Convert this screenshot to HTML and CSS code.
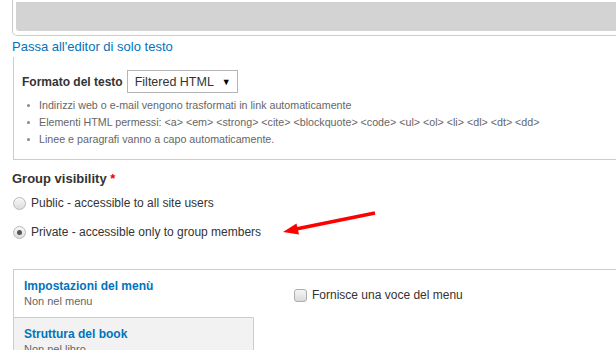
FILE: index.html
```html
<!DOCTYPE html>
<html>
<head>
<meta charset="utf-8">
<title>Group visibility</title>
<link rel="stylesheet" href="styles.css">
</head>
<body>
<div class="page">

  <div class="editor">
    <div class="editor-bottom"></div>
  </div>
  <a class="switch" href="#">Passa all'editor di solo testo</a>

  <div class="format">
    <div class="format-row">
      <span class="format-label">Formato del testo</span>
      <span class="select">Filtered HTML <span class="caret">&#9660;</span></span>
    </div>
    <ul class="tips">
      <li>Indirizzi web o e-mail vengono trasformati in link automaticamente</li>
      <li>Elementi HTML permessi: &lt;a&gt; &lt;em&gt; &lt;strong&gt; &lt;cite&gt; &lt;blockquote&gt; &lt;code&gt; &lt;ul&gt; &lt;ol&gt; &lt;li&gt; &lt;dl&gt; &lt;dt&gt; &lt;dd&gt;</li>
      <li>Linee e paragrafi vanno a capo automaticamente.</li>
    </ul>
  </div>

  <div class="field">
    <div class="field-label">Group visibility <span class="req">*</span></div>
    <div class="radio"><span class="radio-box"></span>Public - accessible to all site users</div>
    <div class="radio"><span class="radio-box checked"></span>Private - accessible only to group members</div>
  </div>

  <div class="vtabs">
    <ul class="vtab-list">
      <li class="vtab active">
        <a href="#">Impostazioni del menù</a>
        <span class="summary">Non nel menu</span>
      </li>
      <li class="vtab">
        <a href="#">Struttura del book</a>
        <span class="summary">Non nel libro</span>
      </li>
    </ul>
    <div class="vtab-pane">
      <div class="check"><span class="check-box"></span>Fornisce una voce del menu</div>
    </div>
  </div>

  <!-- annotation arrow drawn over the form -->
  <svg class="arrow" width="616" height="350" viewBox="0 0 616 350">
    <line x1="375" y1="213" x2="296" y2="229" stroke="#f00" stroke-width="3.5"/>
    <polygon points="283,232 299,234.5 296.5,223.5" fill="#f00"/>
  </svg>
</div>
</body>
</html>
```

FILE: styles.css
```css
html, body {
  margin: 0;
  overflow: hidden;
  background: #fff;
}

body {
  font-family: "Liberation Sans", Arial, sans-serif;
  font-size: 13px;
  color: #333;
}

.page {
  position: relative;
  width: 660px;
  padding-left: 12px;
  box-sizing: border-box;
}

a {
  color: #0074bd;
  text-decoration: none;
}

/* editor remains, its top is scrolled away */
.editor {
  padding: 2px 0 4px 3px;
  border: 1px solid #ccc;
  border-top: 0;
  border-radius: 0 0 5px 5px;
}

.editor-bottom {
  height: 29px;
  background: #d3d3d3;
  border-radius: 0 0 0 3px;
}

.switch {
  display: block;
  margin-top: 2px;
  line-height: 18px;
  height: 19px;
}

/* text format */
.format {
  margin-left: 1px;
  padding: 13px 8px 11px 8px;
  border: 1px solid #ccc;
  border-top: 0;
}

.format-row {
  display: flex;
  align-items: center;
  gap: 4px;
}

.format-label {
  font-size: 12px;
  font-weight: bold;
}

.select {
  display: inline-flex;
  align-items: center;
  height: 21px;
  width: 102px;
  padding-left: 7px;
  border: 1px solid #b5b5b5;
  font-size: 12.5px;
  white-space: nowrap;
  color: #333;
  background: #fff;
}

.caret {
  margin-left: auto;
  margin-right: 6px;
  font-size: 9px;
  color: #000;
}

.tips {
  margin: 4px 0 0;
  padding-left: 17px;
  font-size: 10.7px;
  line-height: 17px;
  color: #666;
  list-style: none;
}

.tips li {
  position: relative;
}

.tips li::before {
  content: "";
  position: absolute;
  left: -12px;
  top: 7px;
  width: 3px;
  height: 3px;
  border-radius: 50%;
  background: #888;
}

/* group visibility */
.field {
  margin-top: 10px;
}

.field-label {
  font-weight: bold;
  line-height: 18px;
}

.req {
  color: #e00;
}

.radio {
  display: flex;
  align-items: center;
  gap: 5px;
  font-size: 12px;
  line-height: 18px;
  margin-top: 6px;
  margin-bottom: 6px;
}

.radio + .radio {
  margin-top: 11px;
}

.radio-box {
  position: relative;
  width: 11px;
  height: 11px;
  border: 1px solid #b9b9b9;
  border-radius: 50%;
  background: linear-gradient(#f8f8f8, #dcdcdc);
  margin-left: 1px;
}

.radio-box.checked::after {
  content: "";
  position: absolute;
  left: 3px;
  top: 3px;
  width: 5px;
  height: 5px;
  border-radius: 50%;
  background: #555;
}

/* vertical tabs */
.vtabs {
  display: flex;
  margin-top: 28px;
  margin-left: 1px;
  border-top: 1px solid #ccc;
  border-left: 1px solid #ccc;
}

.vtab-list {
  width: 240px;
  margin: 0;
  padding: 0;
  list-style: none;
}

.vtab {
  display: flex;
  flex-direction: column;
  padding: 8px 10px 8px;
  background: #f2f2f2;
  border-bottom: 1px solid #ccc;
  border-right: 1px solid #ccc;
}

.vtab.active {
  background: #fff;
  border-right-color: #fff;
}

.vtab a {
  font-size: 12px;
  font-weight: bold;
  line-height: 16px;
}

.summary {
  font-size: 11px;
  line-height: 15px;
  color: #666;
}

.vtab-pane {
  flex: 1;
  padding: 18px 0 0 40px;
}

.check {
  display: flex;
  align-items: center;
  gap: 5px;
  font-size: 12px;
  line-height: 14px;
}

.check-box {
  width: 11px;
  height: 11px;
  border: 1px solid #adadad;
  border-radius: 3px;
  background: linear-gradient(#f6f6f6, #dadada);
}

.arrow {
  position: absolute;
  left: 0;
  top: 0;
  pointer-events: none;
}
```
